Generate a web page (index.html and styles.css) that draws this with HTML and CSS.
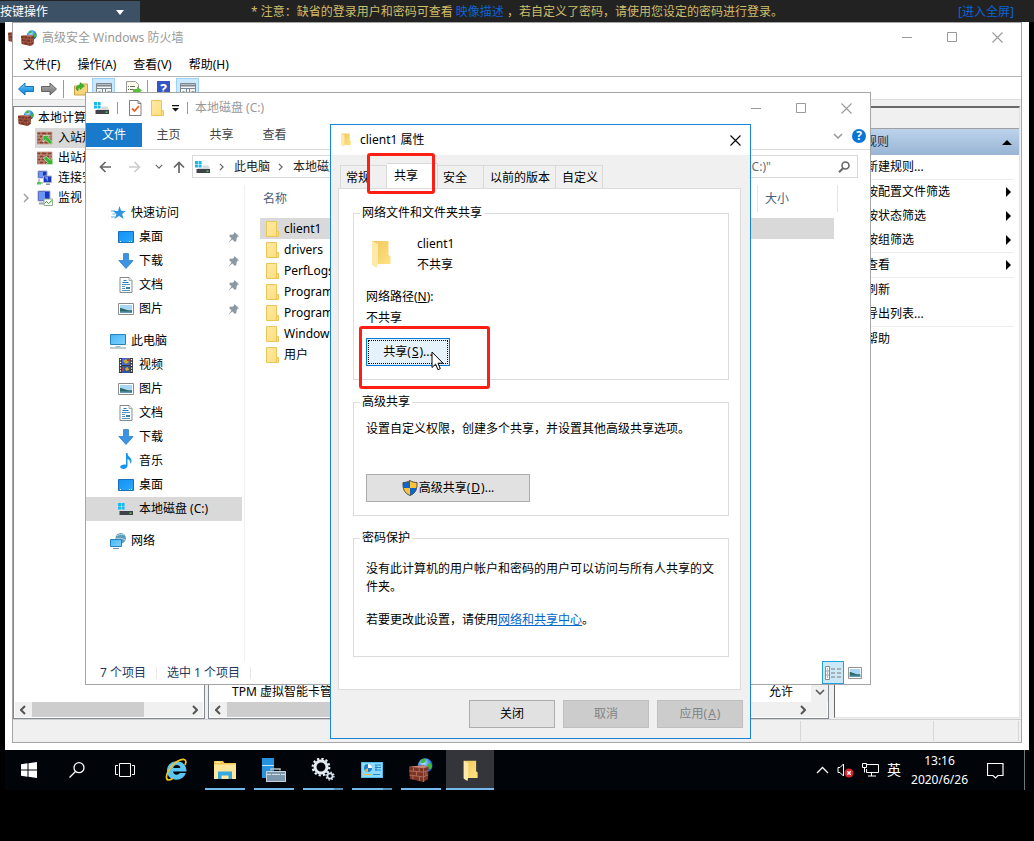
FILE: index.html
```html
<!DOCTYPE html>
<html lang="zh-CN">
<head>
<meta charset="utf-8">
<meta name="viewport" content="width=device-width, initial-scale=1">
<title>远程桌面</title>
<link rel="stylesheet" href="styles.css">
</head>
<body>
<svg class="defs" aria-hidden="true">
  <defs>
    <linearGradient id="gFolder" x1="0" y1="0" x2="1" y2="1"><stop offset="0" stop-color="#ffeaa3"/><stop offset="1" stop-color="#ffdd7c"/></linearGradient>
    <linearGradient id="gFolder2" x1="0" y1="0" x2="1" y2="1"><stop offset="0" stop-color="#f0c75c"/><stop offset="1" stop-color="#ffe184"/></linearGradient>
    <linearGradient id="gScreen" x1="0" y1="0" x2="1" y2="1"><stop offset="0" stop-color="#48b4f7"/><stop offset="1" stop-color="#7fd4fd"/></linearGradient>
    <linearGradient id="gDesk" x1="0" y1="0" x2="1" y2="1"><stop offset="0" stop-color="#1590f5"/><stop offset="1" stop-color="#2aa9fb"/></linearGradient>
    <radialGradient id="gGlobe" cx=".4" cy=".3" r=".8"><stop offset="0" stop-color="#bfe6ff"/><stop offset=".5" stop-color="#2f8be0"/><stop offset="1" stop-color="#0b3f96"/></radialGradient>
    <linearGradient id="gArrow" x1="0" y1="0" x2="0" y2="1"><stop offset="0" stop-color="#8fd3f7"/><stop offset=".5" stop-color="#2ea3ea"/><stop offset="1" stop-color="#1b7fc8"/></linearGradient>
    <linearGradient id="gGrey" x1="0" y1="0" x2="0" y2="1"><stop offset="0" stop-color="#b5b5b5"/><stop offset="1" stop-color="#6f6f6f"/></linearGradient>
  </defs>
  <symbol id="firewall" viewBox="0 0 16 16">
    <circle cx="10.800" cy="5.100" r="4.900" fill="url(#gGlobe)"/>
    <path d="M8.500 1c2-.8 3 .2 2.400 1.300S8.500 3.500 7.500 3zM13.300 3.300c1.200-.4 2 1.200 2.100 2.600-.6 1.200-1.600 2.200-2.300 1.300s-.6-3.300.2-3.900z" fill="#3fb93a"/>
    <path d="M0 5.800l9-.9 4 1-.3 8.200L9.500 16 .6 14z" fill="#7c3426"/>
    <path d="M0 5.800l9-.9 4 1-3.300.9z" fill="#c58673"/>
    <path d="M0 8.600l9.700.8 3.200-1.100M.3 11.400l9.300 1.200 3.200-1.300M3 6.300v2.500M6.800 6.500v2.700M5 9v2.800M2.600 11.700v2.600M7 12.300v3M9.700 6.900V16M11.300 9v2.900" stroke="#b8705d" stroke-width=".6" fill="none"/>
  </symbol>
  <symbol id="bricks" viewBox="0 0 16 14">
    <path d="M0 1h15v12H0z" fill="#8b4030"/>
    <path d="M0 4h15M0 7h15M0 10h15M4 1v3M10 1v3M7 4v3M13 4v3M2 4v3M4 7v3M10 7v3M7 10v3M2 10v3M13 10v3M0 1h15v12H0z" stroke="#cfa79b" stroke-width=".9" fill="none"/>
  </symbol>
  <symbol id="inbound" viewBox="0 0 16 14"><use href="#bricks"/><path d="M6 4.500h6.500L10.800 6.300l4.700 4.700-2.400 2.500-4.800-4.700L6 11z" fill="#35b735" stroke="#e5ffe0" stroke-width=".6"/></symbol>
  <symbol id="outbound" viewBox="0 0 16 14"><use href="#bricks"/><path d="M15.700 13.500h-7l2-1.900-4-4 2.500-2.500 4 4 2.500-2z" fill="#35b735" stroke="#e5ffe0" stroke-width=".6"/></symbol>
  <symbol id="connect" viewBox="0 0 16 16">
    <path d="M1 1h9v7H1z" fill="#1838c0" stroke="#a8b0c8"/><path d="M2 2h4v5H2z" fill="#6d95f5"/>
    <path d="M6.500 6h8v6.500h-8z" fill="#1838c0" stroke="#a8b0c8"/><path d="M7.500 7h3.500v4.500z" fill="#6d95f5"/>
    <path d="M9 13.500h4v1.500H9z" fill="#8e95a8"/><path d="M2 9v4h4" stroke="#888" fill="none"/><path d="M0 12h4v2.500H0z" fill="#55c555"/>
  </symbol>
  <symbol id="monitor" viewBox="0 0 16 16">
    <path d="M1 1h12v10H1z" fill="#1838c0" stroke="#a8b0c8"/><path d="M2 2h6v8H2z" fill="#6d95f5"/>
    <path d="M2 12.500h5v2H2z" fill="#9aa0b0"/><path d="M7 9h8.500v6.500H7z" fill="#fff" stroke="#8fae8f"/>
    <path d="M7.500 13.500l2-2 2 2 3.500-3" stroke="#2aa52a" fill="none"/>
  </symbol>
  <symbol id="drive" viewBox="0 0 16 16">
    <path d="M0 2h3v3H0zM3.600 2h3v3h-3zM0 5.600h3v3H0zM3.600 5.600h3v3h-3z" fill="#18b9f2"/>
    <path d="M7.500 6.500h6L15 10H2.500l1-1h4z" fill="#d7d9dc"/><path d="M1.500 10H15v4H1.500z" fill="#3f4348"/><path d="M11.500 11.500h2v1.300h-2z" fill="#55e04a"/>
  </symbol>
  <symbol id="folder" viewBox="0 0 13 16"><path d="M.5.500h10v10h2v5H.5z" fill="url(#gFolder)" stroke="#eac659"/><path d="M10.500 10.500v5" stroke="#eac659"/></symbol>
  <symbol id="folderOpen" viewBox="0 0 20 28"><path d="M1 1h16.500v14l2 1.500V24H6L1 24z" fill="url(#gFolder2)"/><path d="M1 1l6 3v19l-1 5-5-3z" fill="#ffe9a8"/></symbol>
  <symbol id="star" viewBox="0 0 16 16"><path d="M9.500 1l1.600 4.700 4.700.2-3.700 3 1.500 5-4.500-2.800-4.500 2.700 1.800-4.600L3 5.800l5 .1z" fill="#2f93dd"/><path d="M1 6h4M2.500 9h3M1 12h4" stroke="#58b0ec"/></symbol>
  <symbol id="deskIcon" viewBox="0 0 16 14"><path d="M.5 1.500h15v11H.5z" fill="url(#gDesk)" stroke="#166fb8"/><path d="M2 11.500h1M11 11.500h1M13 11.500h1" stroke="#fff"/></symbol>
  <symbol id="down" viewBox="0 0 16 16"><path d="M5.500.5h5v7h4.700L8 15.500.800 7.500h4.700z" fill="#3a93e4" stroke="#2878be" stroke-width=".7"/></symbol>
  <symbol id="doc" viewBox="0 0 13 16"><path d="M.5.500h9l3 3v12H.5z" fill="#fff" stroke="#85898d"/><path d="M9.500.5v3h3" fill="#eee" stroke="#85898d" stroke-width=".7"/><path d="M4 3.500h3M3 5.500h6" stroke="#1979ca"/><path d="M2.500 7.500h8M2.500 9.500h3M2.500 11.500h3M2.500 13.500h8" stroke="#4d96cc"/><path d="M6.500 10h4v2h-4z" fill="#3c7fa6"/></symbol>
  <symbol id="pic" viewBox="0 0 16 12"><path d="M.5.500h15v11H.5z" fill="#fff" stroke="#8c8c8c"/><path d="M2 2h12v8H2z" fill="#a9d6f6"/><path d="M2 5c3 0 5 2.500 12 2.200V10H2z" fill="#2e6a65"/><path d="M2 8.500h12V10H2z" fill="#5c97bf"/></symbol>
  <symbol id="pc" viewBox="0 0 16 15"><path d="M.5.500h15v10H.5z" fill="url(#gScreen)" stroke="#2682ba"/><path d="M5.500 12.500h5" stroke="#a7b3bb"/><path d="M0 14h16" stroke="#7c93a3"/></symbol>
  <symbol id="video" viewBox="0 0 14 15"><path d="M0 0h14v15H0z" fill="#383838"/><path d="M3 0h8v7H3z" fill="#4468c9"/><path d="M3 8h8v7H3z" fill="#2c55a2"/><path d="M4 3l3-2 3 3-3 2zM6 10l3-1 1 3-3 1z" fill="#d4a52d"/><path d="M8 1h3v2H8zM3 9h2v4H3z" fill="#b54031"/><path d="M1.500 1v14M12.500 1v14" stroke="#fff" stroke-width="1.300" stroke-dasharray="1.300 1.500"/></symbol>
  <symbol id="music" viewBox="0 0 12 16"><path d="M6 0h1.500c0 4 4 4 4 8 0 1-.5 2-1.300 2.700C10.500 7.500 9 6.500 7.500 6v6.800C7.500 14.500 5.500 16 3.500 16S0 15 .2 13.800C.4 12 3.500 11 6 11.700z" fill="#1596ec"/></symbol>
  <symbol id="network" viewBox="0 0 16 16"><circle cx="10.700" cy="5.300" r="5.200" fill="#609cb9"/><path d="M7 3c2-2 5-2 7-1M6 6c3-1 6-1 9 1" stroke="#b9dbe8" fill="none"/><path d="M.5 6.500h11v7H.5z" fill="url(#gScreen)" stroke="#2682ba"/><path d="M3 15.500h6" stroke="#7c93a3"/></symbol>
  <symbol id="pin" viewBox="0 0 10 10"><path d="M6 0l4 4-1.200.4-.9 1-.4 2.800L6.300 9 4 6.800.3 9.700 3.200 6 1 3.700l.8-1.200 2.900-.3.900-1z" fill="#8c99a3"/></symbol>
  <symbol id="chevR" viewBox="0 0 6 10"><path d="M1 1l4 4-4 4" fill="none" stroke="currentColor" stroke-width="1.500"/></symbol>
  <symbol id="chevL" viewBox="0 0 6 10"><path d="M5 1L1 5l4 4" fill="none" stroke="currentColor" stroke-width="2"/></symbol>
  <symbol id="chevD" viewBox="0 0 10 6"><path d="M1 1l4 4 4-4" fill="none" stroke="currentColor" stroke-width="1.500"/></symbol>
  <symbol id="min" viewBox="0 0 11 11"><path d="M0 5.500h10" stroke="currentColor"/></symbol>
  <symbol id="max" viewBox="0 0 11 11"><path d="M.5.500h9v9h-9z" fill="none" stroke="currentColor"/></symbol>
  <symbol id="close" viewBox="0 0 11 11"><path d="M.5.500l10 10M10.500.5l-10 10" stroke="currentColor" stroke-width="1.100"/></symbol>
  <symbol id="arrow" viewBox="0 0 12 12"><path d="M6.500 1L1.500 6l5 5M1.500 6H12" fill="none" stroke="currentColor" stroke-width="1.700"/></symbol>
  <symbol id="fatArrow" viewBox="0 0 16 14"><path d="M7 1v3.500h8.500v5H7V13L.5 7z" fill="inherit" stroke="inherit"/></symbol>
  <symbol id="panel" viewBox="0 0 16 14"><path d="M.5.500h15v13H.5z" fill="#f4f4f4" stroke="#7c8792"/><path d="M1 2.500h14" stroke="#7c8792" stroke-width="2"/><path d="M1 5.500h14M6.500 6v8M9.500 6v8" stroke="#7c8792"/><path d="M2.500 8.500h2M2.500 10.500h2M11.500 8.500h3M11.500 10.500h3" stroke="#8a9"/></symbol>
</svg>

<header class="topbar">
  <div class="keys">
    <select class="keys-select" aria-label="按键操作"><option>按键操作</option></select>
    <svg class="keys-arrow" width="8" height="5" viewBox="0 0 8 5"><path d="M0 0h8L4 5z" fill="#fff"/></svg>
  </div>
  <p class="notice">* 注意：缺省的登录用户和密码可查看 <a href="#">映像描述</a> ，若自定义了密码，请使用您设定的密码进行登录。</p>
  <a class="fullscreen" href="#">[进入全屏]</a>
</header>

<main class="desktop">
  <div class="behind"><svg width="16" height="16"><use href="#firewall"/></svg></div>

  <section class="window firewall">
    <div class="fw-title">
      <svg width="16" height="16"><use href="#firewall"/></svg>
      <h1 class="title-text">高级安全 Windows 防火墙</h1>
      <div class="controls">
        <button aria-label="最小化"><svg width="11" height="11"><use href="#min"/></svg></button>
        <button aria-label="最大化"><svg width="11" height="11"><use href="#max"/></svg></button>
        <button aria-label="关闭"><svg width="11" height="11"><use href="#close"/></svg></button>
      </div>
    </div>
    <nav class="fw-menu">
      <button>文件(F)</button><button>操作(A)</button><button>查看(V)</button><button>帮助(H)</button>
    </nav>
    <div class="fw-tools">
      <button class="tool tool-back" aria-label="后退"><svg width="16" height="14"><use href="#fatArrow"/></svg></button>
      <button class="tool tool-next" aria-label="前进"><svg class="flip" width="16" height="14"><use href="#fatArrow"/></svg></button>
      <span class="tool-sep"></span>
      <button class="tool" aria-label="向上"><svg width="14" height="16" viewBox="0 0 14 16"><path d="M.5 5h5l1-2h7v11H.5z" fill="#f5d67b" stroke="#c9a33f"/><path d="M2 8c0-3 2-4 4-4V1.500L10.500 5 6 8.500V6.500C4.500 6.500 4 8 4 10z" fill="#3fb32f" stroke="#2c8a20" stroke-width=".5"/></svg></button>
      <button class="tool tool-on" aria-label="显示/隐藏控制台树"><svg width="16" height="14"><use href="#panel"/></svg></button>
      <button class="tool tool-export" aria-label="导出列表"><svg width="16" height="16" viewBox="0 0 16 16"><path d="M.5.500h9l3 3v12H.5z" fill="#fdfbe9" stroke="#999"/><path d="M2 5.500h1M4 5.500h5M2 8.500h1M4 8.500h5M2 11.500h1M4 11.500h5" stroke="#666"/><path d="M7 8h4V5.500l5 4-5 4V11H7z" fill="#5bbf3c"/></svg></button>
      <span class="tool-sep"></span>
      <button class="tool tool-help" aria-label="帮助">?</button>
      <button class="tool tool-on" aria-label="显示/隐藏操作窗格"><svg width="16" height="14"><use href="#panel"/></svg></button>
    </div>
    <div class="fw-body">
      <div class="pane tree-pane">
        <ul class="tree">
          <li class="tree-root"><svg width="16" height="16"><use href="#firewall"/></svg>本地计算机</li>
          <li class="tree-item"><span class="tree-label selected"><svg width="16" height="14"><use href="#inbound"/></svg>入站规则</span></li>
          <li class="tree-item"><span class="tree-label"><svg width="16" height="14"><use href="#outbound"/></svg>出站规则</span></li>
          <li class="tree-item"><span class="tree-label"><svg width="16" height="16"><use href="#connect"/></svg>连接安全规则</span></li>
          <li class="tree-item"><svg class="expander" width="6" height="10"><use href="#chevR"/></svg><span class="tree-label"><svg width="16" height="16"><use href="#monitor"/></svg>监视</span></li>
        </ul>
        <div class="hscroll">
          <svg width="6" height="10"><use href="#chevL"/></svg>
          <span class="thumb thumb-tree"></span>
          <svg class="flip" width="6" height="10"><use href="#chevL"/></svg>
        </div>
      </div>
      <div class="pane rules-pane">
        <div class="rules-view">
          <div class="rule-row"><span>TPM 虚拟智能卡管理</span><span class="rule-action">允许</span></div>
          <div class="vscroll"><svg width="10" height="6"><use href="#chevD"/></svg></div>
        </div>
        <div class="hscroll hscroll-rules">
          <svg width="6" height="10"><use href="#chevL"/></svg>
          <span class="thumb thumb-rules"></span>
          <svg class="flip" width="6" height="10"><use href="#chevL"/></svg>
        </div>
      </div>
      <aside class="actions-pane">
        <div class="actions-head"></div>
        <h2 class="actions-title">入站规则 <svg width="10" height="5" viewBox="0 0 10 5"><path d="M0 5l5-5 5 5z"/></svg></h2>
        <ul class="actions">
          <li>新建规则...</li>
          <li class="ruled">按配置文件筛选<svg width="5" height="10" viewBox="0 0 5 10"><path d="M0 0l5 5-5 5z"/></svg></li>
          <li>按状态筛选<svg width="5" height="10" viewBox="0 0 5 10"><path d="M0 0l5 5-5 5z"/></svg></li>
          <li>按组筛选<svg width="5" height="10" viewBox="0 0 5 10"><path d="M0 0l5 5-5 5z"/></svg></li>
          <li class="ruled">查看<svg width="5" height="10" viewBox="0 0 5 10"><path d="M0 0l5 5-5 5z"/></svg></li>
          <li class="ruled">刷新</li>
          <li>导出列表...</li>
          <li class="ruled">帮助</li>
        </ul>
      </aside>
    </div>
    <div class="fw-status"><span></span><span></span><span></span></div>
  </section>

  <section class="window explorer">
    <div class="ex-title">
      <svg width="16" height="16"><use href="#drive"/></svg>
      <span class="mini-sep"></span>
      <svg class="ex-check" width="13" height="16" viewBox="0 0 13 16"><path d="M.5.500h8.500l3 3v12H.5z" fill="#fff" stroke="#808080"/><path d="M9 .5v3h3" fill="none" stroke="#808080"/><path d="M3 8.500l2.500 2.500 4.500-5" fill="none" stroke="#e8622a" stroke-width="1.800"/></svg>
      <svg class="ex-folder" width="13" height="16"><use href="#folder"/></svg>
      <svg width="7" height="7" viewBox="0 0 7 7"><path d="M0 0h7v1.300H0zM0 3h7L3.500 6.500z" fill="#111"/></svg>
      <span class="mini-sep mini-sep-end"></span>
      <h2 class="title-text">本地磁盘 (C:)</h2>
      <div class="controls">
        <button aria-label="最小化"><svg width="11" height="11"><use href="#min"/></svg></button>
        <button aria-label="最大化"><svg width="11" height="11"><use href="#max"/></svg></button>
        <button aria-label="关闭"><svg width="11" height="11"><use href="#close"/></svg></button>
      </div>
    </div>
    <div class="ribbon">
      <button class="ribbon-file">文件</button><button>主页</button><button>共享</button><button>查看</button>
      <svg class="ribbon-chev" width="10" height="6"><use href="#chevD"/></svg>
      <button class="ribbon-help" aria-label="帮助">?</button>
    </div>
    <div class="ex-nav">
      <button aria-label="后退"><svg width="12" height="12"><use href="#arrow"/></svg></button>
      <button class="nav-off" aria-label="前进"><svg class="flip" width="12" height="12"><use href="#arrow"/></svg></button>
      <button class="nav-chev" aria-label="最近位置"><svg width="8" height="5" viewBox="0 0 10 6"><use href="#chevD"/></svg></button>
      <button aria-label="向上"><svg class="up" width="12" height="12"><use href="#arrow"/></svg></button>
      <div class="address">
        <svg width="16" height="16"><use href="#drive"/></svg>
        <svg class="crumb" width="5" height="8"><use href="#chevR"/></svg>
        <span>此电脑</span>
        <svg class="crumb" width="5" height="8"><use href="#chevR"/></svg>
        <span>本地磁盘 (C:)</span>
      </div>
      <div class="search">
        <input class="search-input" aria-label="搜索" value="搜索&quot;本地磁盘 (C:)&quot;">
        <svg width="12" height="12" viewBox="0 0 12 12"><circle cx="7.500" cy="4.500" r="3.500" fill="none" stroke="#666" stroke-width="1.600"/><path d="M5 7.200L1 11.200" stroke="#666" stroke-width="2"/></svg>
      </div>
    </div>
    <div class="ex-body">
      <nav class="sidebar">
        <ul>
          <li class="group"><svg width="16" height="16"><use href="#star"/></svg>快速访问</li>
          <li><svg width="16" height="14"><use href="#deskIcon"/></svg>桌面<svg class="pin" width="11" height="11"><use href="#pin"/></svg></li>
          <li><svg width="16" height="16"><use href="#down"/></svg>下载<svg class="pin" width="11" height="11"><use href="#pin"/></svg></li>
          <li><svg width="16" height="16"><use href="#doc"/></svg>文档<svg class="pin" width="11" height="11"><use href="#pin"/></svg></li>
          <li><svg width="16" height="12"><use href="#pic"/></svg>图片<svg class="pin" width="11" height="11"><use href="#pin"/></svg></li>
        </ul>
        <ul>
          <li class="group"><svg width="16" height="15"><use href="#pc"/></svg>此电脑</li>
          <li><svg width="16" height="15"><use href="#video"/></svg>视频</li>
          <li><svg width="16" height="12"><use href="#pic"/></svg>图片</li>
          <li><svg width="16" height="16"><use href="#doc"/></svg>文档</li>
          <li><svg width="16" height="16"><use href="#down"/></svg>下载</li>
          <li><svg width="16" height="16"><use href="#music"/></svg>音乐</li>
          <li><svg width="16" height="14"><use href="#deskIcon"/></svg>桌面</li>
          <li class="current"><svg width="16" height="16"><use href="#drive"/></svg>本地磁盘 (C:)</li>
        </ul>
        <ul>
          <li class="group"><svg width="16" height="16"><use href="#network"/></svg>网络</li>
        </ul>
      </nav>
      <div class="files">
        <table class="file-table">
          <thead><tr><th class="col-name"><span>名称</span></th><th class="col-size"><span>大小</span></th></tr></thead>
          <tbody>
            <tr class="current"><td><span class="file"><svg width="13" height="16"><use href="#folder"/></svg>client1</span></td><td></td></tr>
            <tr><td><span class="file"><svg width="13" height="16"><use href="#folder"/></svg>drivers</span></td><td></td></tr>
            <tr><td><span class="file"><svg width="13" height="16"><use href="#folder"/></svg>PerfLogs</span></td><td></td></tr>
            <tr><td><span class="file"><svg width="13" height="16"><use href="#folder"/></svg>Program Files</span></td><td></td></tr>
            <tr><td><span class="file"><svg width="13" height="16"><use href="#folder"/></svg>Program Files</span></td><td></td></tr>
            <tr><td><span class="file"><svg width="13" height="16"><use href="#folder"/></svg>Windows</span></td><td></td></tr>
            <tr><td><span class="file"><svg width="13" height="16"><use href="#folder"/></svg>用户</span></td><td></td></tr>
          </tbody>
        </table>
      </div>
    </div>
    <div class="ex-status">
      <span class="stat">7 个项目</span><span class="stat">选中 1 个项目</span>
      <button class="view view-on" aria-label="详细信息"><svg width="16" height="14" viewBox="0 0 16 14"><path d="M.5.500h4v13h-4zM.5 5h4M.5 9h4" fill="#fff" stroke="#8a8a8a"/><path d="M2 3h1M2 7h1" stroke="#3a7bd0"/><path d="M2 11h1" stroke="#d33"/><path d="M6 3h4M12 3h4M6 7h4M12 7h4M6 11h4M12 11h4" stroke="#7a7a7a"/></svg></button>
      <button class="view" aria-label="缩略图"><svg width="14" height="12" viewBox="0 0 16 12" preserveAspectRatio="none"><use href="#pic"/></svg></button>
    </div>
  </section>

  <section class="window dialog" role="dialog" aria-label="client1 属性">
    <div class="dlg-title">
      <svg width="10" height="14"><use href="#folderOpen"/></svg>
      <h2 class="dlg-name">client1 属性</h2>
      <button class="dlg-close" aria-label="关闭窗口"><svg width="11" height="11"><use href="#close"/></svg></button>
    </div>
    <div class="tabs" role="tablist">
      <button class="tab" role="tab">常规</button>
      <button class="tab tab-active" role="tab" aria-selected="true">共享</button>
      <button class="tab" role="tab">安全</button>
      <button class="tab tab-wide" role="tab">以前的版本</button>
      <button class="tab" role="tab">自定义</button>
    </div>
    <div class="sheet">
      <fieldset class="box">
        <legend>网络文件和文件夹共享</legend>
        <div class="box-in">
          <div class="share">
            <svg width="20" height="28"><use href="#folderOpen"/></svg>
            <p>client1<br>不共享</p>
          </div>
          <p class="path">网络路径(<u>N</u>):<br>不共享</p>
          <button class="btn btn-focus">共享(<u>S</u>)...</button>
        </div>
      </fieldset>
      <fieldset class="box">
        <legend>高级共享</legend>
        <div class="box-in adv">
          <p>设置自定义权限，创建多个共享，并设置其他高级共享选项。</p>
          <button class="btn btn-adv"><svg width="16" height="16" viewBox="0 0 16 16"><path d="M8 .5c2 1.500 4.500 2 7 2 .3 6-1 10.500-7 13C2 13 .7 8.500 1 2.500c2.500 0 5-.5 7-2z" fill="#ffc233"/><path d="M8 .5V8H1.300C1 6 1 4.500 1 2.500c2.500 0 5-.5 7-2zM8 8h6.700c-.5 3.500-2.500 6-6.700 7.500z" fill="#0f66c9"/><path d="M8 .5c2 1.500 4.500 2 7 2 .3 6-1 10.500-7 13C2 13 .7 8.500 1 2.500c2.500 0 5-.5 7-2z" fill="none" stroke="#4d4d4d"/></svg>高级共享(<u>D</u>)...</button>
        </div>
      </fieldset>
      <fieldset class="box">
        <legend>密码保护</legend>
        <div class="box-in pwd">
          <p>没有此计算机的用户帐户和密码的用户可以访问与所有人共享的文件夹。</p>
          <p>若要更改此设置，请使用<a href="#">网络和共享中心</a>。</p>
        </div>
      </fieldset>
    </div>
    <div class="dlg-foot">
      <button class="btn btn-foot">关闭</button>
      <button class="btn btn-foot" disabled>取消</button>
      <button class="btn btn-foot" disabled>应用(<u>A</u>)</button>
    </div>
  </section>

  <div class="mark mark-tab"></div>
  <div class="mark mark-share"></div>
  <svg class="cursor" width="13" height="20" viewBox="0 0 13 20"><path d="M1 1v15.500l3.600-3.400 2.300 5.600 2.400-1-2.300-5.500h5z" fill="#fff" stroke="#000"/></svg>
</main>

<footer class="taskbar">
  <button class="task" aria-label="开始"><svg width="16" height="16" viewBox="0 0 16 16"><path d="M0 2.200l6.500-.9v6.200H0zM7.500 1.200L16 0v7.500H7.500zM0 8.500h6.500v6.200L0 13.800zM7.500 8.500H16V16l-8.500-1.200z" fill="#fff"/></svg></button>
  <button class="task" aria-label="搜索"><svg width="16" height="16" viewBox="0 0 16 16"><circle cx="10" cy="5.700" r="5" fill="none" stroke="#fff" stroke-width="1.300"/><path d="M6.500 9.500L.5 15.500" stroke="#fff" stroke-width="1.300"/></svg></button>
  <button class="task task-view" aria-label="任务视图"><svg width="20" height="14" viewBox="0 0 20 14"><path d="M4.500.500h11v13h-11zM3 2.500H.5v9H3M17 2.500h2.500v9H17" fill="none" stroke="#fff"/></svg></button>
  <button class="task" aria-label="Internet Explorer"><svg width="24" height="24" viewBox="0 0 24 24"><path d="M22.500 13.500H9c.2 2 1.700 3.200 3.600 3.200 1.400 0 2.500-.5 3.200-1.600h6c-1.300 4-4.500 6.600-9.200 6.600C7 21.700 3 18 3 12.700S7.200 3.300 12.700 3.300c6 0 10 4.200 9.800 10.200zM9.200 10h7.200c-.2-1.800-1.700-3-3.600-3s-3.300 1.200-3.600 3z" fill="#5cc6f3"/><path d="M21 7c1.500-3 1-5.500-1.500-5.600C15 1.200 7 7 4 13.500c-2.200 4.500-2 8.300.5 8.500 1.200.1 2.800-.6 4.200-1.500" fill="none" stroke="#f6c51d" stroke-width="1.700"/></svg></button>
  <button class="task open" aria-label="文件资源管理器"><svg width="22" height="18" viewBox="0 0 22 18"><path d="M0 0h9l1.500 2H22v16H0z" fill="#f3c64f"/><path d="M0 3.500h22V18H0z" fill="#ffe69a"/><path d="M1.500 1.200h5" stroke="#fff6c9"/><path d="M4 18v-7.500h14V18h-3.500v-3.500h-7V18z" fill="#35a8e0"/></svg></button>
  <button class="task open" aria-label="服务器管理器"><svg width="24" height="24" viewBox="0 0 24 24"><path d="M0 0h12v20H0z" fill="#2492de"/><path d="M0 7.500h12" stroke="#c8e6fb"/><path d="M9 12.500V11h9v1.500" fill="none" stroke="#b8c4cc" stroke-width="1.500"/><path d="M4 13h20v11H4z" fill="#7c98ac"/><path d="M4.500 13.500h19v10h-19z" fill="none" stroke="#c7d4dc"/><path d="M5 16.500h4M10 16.500h8M19 16.500h4" stroke="#d5e0e7"/></svg></button>
  <button class="task open many" aria-label="服务"><svg width="24" height="24" viewBox="0 0 24 24"><circle cx="10" cy="9" r="6" fill="none" stroke="#e4edf4" stroke-width="3"/><circle cx="10" cy="9" r="8.300" fill="none" stroke="#e4edf4" stroke-width="2.200" stroke-dasharray="2.300 2.050"/><circle cx="19" cy="18" r="2.600" fill="none" stroke="#d5e3ee" stroke-width="1.800"/><circle cx="19" cy="18" r="4" fill="none" stroke="#d5e3ee" stroke-width="1.300" stroke-dasharray="1.500 1.640"/></svg></button>
  <button class="task open many" aria-label="控制面板"><svg width="22" height="16" viewBox="0 0 22 16"><path d="M0 0h22v16H0z" fill="#53bdf0"/><path d="M1 1h20v14H1z" fill="#8adafb"/><circle cx="7" cy="6" r="4" fill="#1e7ec8"/><path d="M7 6V2a4 4 0 014 4z" fill="#fff"/><path d="M3.500 8A4 4 0 007 10V6z" fill="#f8b63a"/><path d="M14 3h6M14 5.500h6M14 8h6M15 3v6" stroke="#2b86c5"/><path d="M3 12.500h8" stroke="#f8b63a"/><path d="M12 12.500h7" stroke="#2b86c5"/></svg></button>
  <button class="task open" aria-label="高级安全 Windows 防火墙"><svg width="24" height="24"><use href="#firewall"/></svg></button>
  <button class="task open active" aria-label="client1 属性"><svg width="15" height="21"><use href="#folderOpen"/></svg></button>
  <div class="tray">
    <svg width="13" height="8" viewBox="0 0 13 8"><path d="M1 7l5.500-5.500L12 7" fill="none" stroke="#fff" stroke-width="1.300"/></svg>
    <svg width="17" height="15" viewBox="0 0 17 15"><path d="M1 4.500h2L6.500 1v12L3 9.500H1z" fill="none" stroke="#fff"/><circle cx="12" cy="10" r="4.500" fill="#d9242c"/><path d="M10.300 8.300l3.400 3.400M13.700 8.300l-3.400 3.400" stroke="#fff" stroke-width="1.300"/></svg>
    <svg width="17" height="14" viewBox="0 0 17 14"><path d="M5 1.500h11.500v8H4.500V6M9.500 10v3M6 13h8M.5.500h4v4h-4zM2.500 4.500v5" fill="none" stroke="#fff"/></svg>
    <span class="ime">英</span>
    <time class="clock">13:16<br>2020/6/26</time>
    <svg class="action-center" width="17" height="17" viewBox="0 0 17 17"><path d="M.5 1.500h15.500v12h-5L8.500 16 6 13.500H.5z" fill="none" stroke="#fff" stroke-width="1.200"/></svg>
    <span class="show-desktop"></span>
  </div>
</footer>
</body>
</html>
```
FILE: styles.css
```css
* { box-sizing: border-box; }
body {
  margin: 0;
  min-height: 100vh;
  background: #000;
  color: #000;
  font: 12px/16px "Noto Sans", "Noto Sans CJK SC", sans-serif;
  overflow-x: hidden;
}
svg { display: block; flex: none; }
button, input, select { font: inherit; color: inherit; }
button { padding: 0; border: 0; background: none; white-space: nowrap; }
h1, h2, p, ul { margin: 0; padding: 0; font-size: 12px; font-weight: 400; }
ul { list-style: none; }
a { color: #0066cc; }
.defs { position: absolute; width: 0; height: 0; }
.flip { transform: scaleX(-1); }

/* Console bar */
.topbar {
  display: grid;
  grid-template-columns: 1fr auto 1fr;
  align-items: center;
  height: 22px;
  padding-top: 1px;
  background: #222;
}
.keys { position: relative; width: 140px; height: 22px; background: #3d5166; }
.keys-select {
  width: 100%; height: 22px; padding: 0; border: 0;
  appearance: none; background: transparent; color: #fff;
}
.keys-arrow { position: absolute; right: 16px; top: 9px; }
.notice { color: #d0bd6a; white-space: nowrap; }
.topbar a { color: #0c62d6; text-decoration: none; }
.fullscreen { justify-self: end; padding-right: 20px; }

/* Desktop and windows */
.desktop { position: relative; height: 728px; margin: 0 5px; background: #fff; overflow: hidden; }
.behind { position: absolute; left: 3px; top: 5px; width: 5px; overflow: hidden; }
.window { position: absolute; display: flex; flex-direction: column; background: #fff; border: 1px solid #a5a5a5; }
.title-text { color: #999; }
.controls { display: flex; margin-left: auto; padding-right: 1px; color: #999; }
.controls button { display: grid; place-items: center; width: 45px; height: 28px; }

/* Firewall */
.firewall { left: 7px; right: 7px; top: 0; height: 721px; }
.fw-title { display: flex; align-items: center; gap: 5px; height: 29px; padding-left: 8px; }
.fw-menu { display: flex; gap: 17px; height: 25px; padding: 2px 0 0 10px; border-bottom: 1px solid #b4b4b4; }
.fw-tools { display: flex; align-items: center; height: 23px; padding: 1px 0 0 5px; border-bottom: 1px solid #ddd; }
.tool { display: grid; place-items: center; width: 23px; height: 22px; }
.tool-back, .tool-next { width: 16px; margin-right: 7px; }
.tool-next { margin-right: 6px; fill: url(#gGrey); stroke: #666; }
.tool-back { fill: url(#gArrow); stroke: #1873b8; }
.tool-sep { width: 1px; height: 18px; margin-right: 5px; background: #999; }
.tool-on { background: #cce8ff; border: 1px solid #99d1ff; padding-top: 2px; }
.tool-export { width: 16px; margin: 0 5px 0 11px; }
.tool-help {
  width: 13px; height: 16px; margin: 0 6px 0 4px;
  background: #3455c4; color: #fff; font-size: 14px; font-weight: 700;
}
.fw-body { display: flex; flex: 1; gap: 3px; min-height: 0; padding-top: 6px; padding-right: 1px; background: #f0f0f0; }
.pane { display: flex; flex-direction: column; justify-content: space-between; background: #fff; border: 1px solid #828790; overflow: hidden; }
.tree-pane { width: 192px; flex: none; }
.tree { padding-top: 1px; white-space: nowrap; }
.tree li { display: flex; align-items: center; height: 20px; }
.tree-root { gap: 4px; padding-left: 4px; }
.tree-item { position: relative; padding-left: 21px; }
.tree-label { display: flex; align-items: center; gap: 5px; height: 20px; padding: 0 2px; }
.selected { background: #d9d9d9; }
.expander { position: absolute; left: 9px; top: 5px; color: #a0a0a0; }
.hscroll { display: flex; align-items: center; height: 15px; margin: 0 1px 1px; padding: 0 5px; background: #f0f0f0; color: #555; }
.thumb { height: 15px; background: #cdcdcd; }
.thumb-tree { width: 112px; margin: 0 auto 0 6px; }
.rules-pane { flex: 1; justify-content: flex-end; }
.rules-view { display: flex; height: 20px; }
.rule-row { display: flex; align-items: center; justify-content: space-between; flex: 1; padding: 0 18px 0 23px; white-space: nowrap; }
.vscroll { display: grid; place-items: center; width: 17px; height: 20px; background: #f0f0f0; color: #555; }
.hscroll-rules { padding-right: 21px; }
.thumb-rules { flex: 1; margin: 0 90px 0 6px; }
.actions-pane { width: 186px; flex: none; margin-left: 2px; margin-bottom: 1px; background: #fff; border: 1px solid #e3e3e3; border-top: 2px solid #696969; border-left: 1px solid #696969; }
.actions-head { height: 21px; background: #f0f0f0; border-bottom: 1px solid #a0a0a0; }
.actions-title {
  display: flex; align-items: center; justify-content: space-between;
  height: 26px; padding: 0 7px 0 6px;
  background: linear-gradient(#bcd3ec, #99b4d4); color: #1c2f4a;
}
.actions { padding-right: 5px; }
.actions li { display: flex; align-items: center; justify-content: space-between; height: 24px; padding: 0 3px 0 31px; }
.actions .ruled { height: 25px; border-top: 1px solid #ededed; }
.actions svg, .actions-title svg { fill: #000; }
.fw-status { display: flex; justify-content: flex-end; height: 23px; padding: 1px 2px 1px 0; background: #f0f0f0; border-top: 1px solid #d0d0d0; }
.fw-status span { width: 133px; border-right: 1px solid #d7d7d7; }
.fw-status span:last-child { width: 85px; }

/* Explorer */
.explorer { left: 80px; top: 70px; width: 786px; height: 593px; }
.ex-title { display: flex; align-items: center; height: 30px; padding-left: 8px; }
.mini-sep { width: 1px; height: 12px; margin: 0 7px; background: #999; }
.mini-sep-end { margin-left: 8px; }
.ex-check { margin: 0 9px 0 4px; }
.ex-folder { margin-right: 8px; }
.ribbon { display: flex; height: 27px; padding-right: 4px; border-bottom: 1px solid #dadada; color: #444; }
.ribbon button { width: 53px; height: 24px; }
.ribbon .ribbon-file { width: 56px; background: #1979ca; color: #fff; }
.ribbon-chev { margin: 10px 9px 0 auto; color: #999; }
.ribbon .ribbon-help { width: 14px; height: 14px; margin-top: 6px; border-radius: 50%; background: #0a74d4; color: #fff; line-height: 14px; font-weight: 700; }
.ex-nav { display: flex; align-items: center; gap: 18px; height: 35px; padding: 5px 12px 7px 13px; color: #666; }
.nav-off { color: #ccc; }
.nav-chev { margin: 0 -8px 0 -4px; }
.up { transform: rotate(90deg); }
.address { display: flex; align-items: center; gap: 8px; flex: 1; height: 23px; margin-left: -11px; padding-left: 2px; border: 1px solid #d9d9d9; color: #222; white-space: nowrap; }
.crumb { color: #666; margin-right: 2px; }
.search { display: flex; align-items: center; width: 198px; height: 23px; margin-left: -10px; padding: 0 7px; border: 1px solid #d9d9d9; }
.search-input { flex: 1; min-width: 0; padding: 0; border: 0; background: none; color: #6d6d6d; outline: 0; }
.ex-body { display: flex; flex: 1; min-height: 0; }
.sidebar { width: 159px; padding: 16px 2px 0 0; border-right: 1px solid #f0f0f0; }
.sidebar ul { margin-bottom: 8px; }
.sidebar li { display: flex; align-items: center; gap: 5px; height: 24px; padding: 0 3px 0 32px; }
.sidebar .group { padding-left: 24px; }
.sidebar .current, .file-table .current { background: #d9d9d9; }
.pin { margin-left: auto; }
.files { flex: 1; padding: 0 36px 0 15px; }
.file-table { width: 100%; border-collapse: collapse; table-layout: fixed; }
.file-table th { height: 33px; padding: 0; text-align: left; vertical-align: top; font-weight: 400; color: #4c607a; }
.file-table th span { display: block; height: 27px; line-height: 27px; padding-left: 3px; border-right: 1px solid #e5e5e5; }
.file-table .col-size { width: 76px; }
.file-table .col-size span { padding-left: 7px; width: 80px; }
.file-table td { height: 21px; padding: 0; }
.file { display: flex; align-items: center; gap: 5px; padding-left: 6px; }
.ex-status { display: flex; align-items: center; height: 23px; padding-right: 4px; color: #1e395b; }
.stat { height: 12px; line-height: 12px; padding: 0 10px; border-right: 1px solid #e8e8e8; }
.stat:first-child { padding-left: 14px; }
.view { display: grid; place-items: center; width: 22px; height: 23px; }
.view-on { margin-left: auto; background: #cbe8f6; border: 1px solid #26a0da; }

/* Properties dialog */
.dialog { left: 325px; top: 102px; width: 421px; background: #f0f0f0; border-color: #1883d7; }
.dlg-title { display: flex; align-items: center; gap: 9px; height: 30px; padding: 0 9px 0 10px; background: #fff; }
.dlg-close { margin-left: auto; }
.tabs { display: flex; align-items: flex-end; height: 33px; padding: 0 9px; }
.tab { height: 23px; min-width: 46px; padding: 2px 4px 0 5px; text-align: left; border: 1px solid #d9d9d9; border-left: 0; border-bottom: 0; background: #f0f0f0; }
.tab:first-child { min-width: 47px; border-left: 1px solid #d9d9d9; }
.tab-active { height: 25px; min-width: 51px; padding: 0 4px 1px 7px; background: #fff; }
.tab-wide, .tab:last-child { padding-left: 6px; }
.tab-wide { min-width: 72px; }
.sheet { display: grid; gap: 14px; margin: 0 9px 0 7px; padding: 16px 11px 32px 14px; background: #fff; border: 1px solid #dcdcdc; }
.box { min-width: 0; margin: 0; padding: 0 6px; border: 1px solid #dcdcdc; }
.box legend { padding: 0 2px; line-height: 16px; }
.box-in { padding: 12px 0 13px 6px; line-height: 21px; }
.share { display: flex; align-items: center; gap: 26px; padding-left: 5px; }
.path { margin: 11px 0 10px; }
.btn { display: flex; align-items: center; justify-content: center; gap: 1px; height: 28px; border: 1px solid #adadad; background: #e1e1e1; line-height: 16px; }
.btn-focus { width: 84px; border-color: #0078d7; background: #e5f1fb; outline: 1px dotted #000; outline-offset: -3px; }
.adv { padding: 9px 0 13px 6px; line-height: 20px; }
.adv p { margin-bottom: 35px; }
.btn-adv { width: 164px; }
.pwd { padding: 14px 0 27px 6px; line-height: 18px; }
.pwd p + p { margin-top: 15px; }
.dlg-foot { display: flex; justify-content: flex-end; gap: 8px; padding: 10px 7px; }
.btn-foot { width: 86px; }
.btn:disabled { background: #ccc; border-color: #bfbfbf; color: #838383; }

/* Annotations */
.mark { position: absolute; border: 3px solid #ff1e14; border-radius: 3px; }
.mark-tab { left: 362px; top: 131px; width: 68px; height: 41px; }
.mark-share { left: 354px; top: 304px; width: 131px; height: 63px; }
.cursor { position: absolute; left: 426px; top: 329px; }

/* Taskbar */
.taskbar { display: flex; height: 40px; margin: 0 5px; background: #010409; color: #fff; }
.task { display: grid; place-items: center; width: 48px; height: 40px; margin-right: 1px; position: relative; }
.task:nth-child(-n+2) { margin-right: 0; }
.task-view { margin-right: 3px; }
.open::after { content: ""; position: absolute; left: 4px; right: 4px; bottom: 0; height: 2px; background: #76b9ed; }
.many::after { background: linear-gradient(90deg, #76b9ed 78%, #5a8db5 78%); }
.active { background: #34353a; }
.active::after { left: 0; right: 0; }
.tray { display: flex; align-items: center; gap: 8px; margin-left: auto; }
.ime { font-size: 14px; }
.clock { margin: 0 11px 0 2px; line-height: 19px; text-align: center; }
.show-desktop { width: 5px; height: 40px; margin-left: 12px; border-left: 1px solid #777; }
```
